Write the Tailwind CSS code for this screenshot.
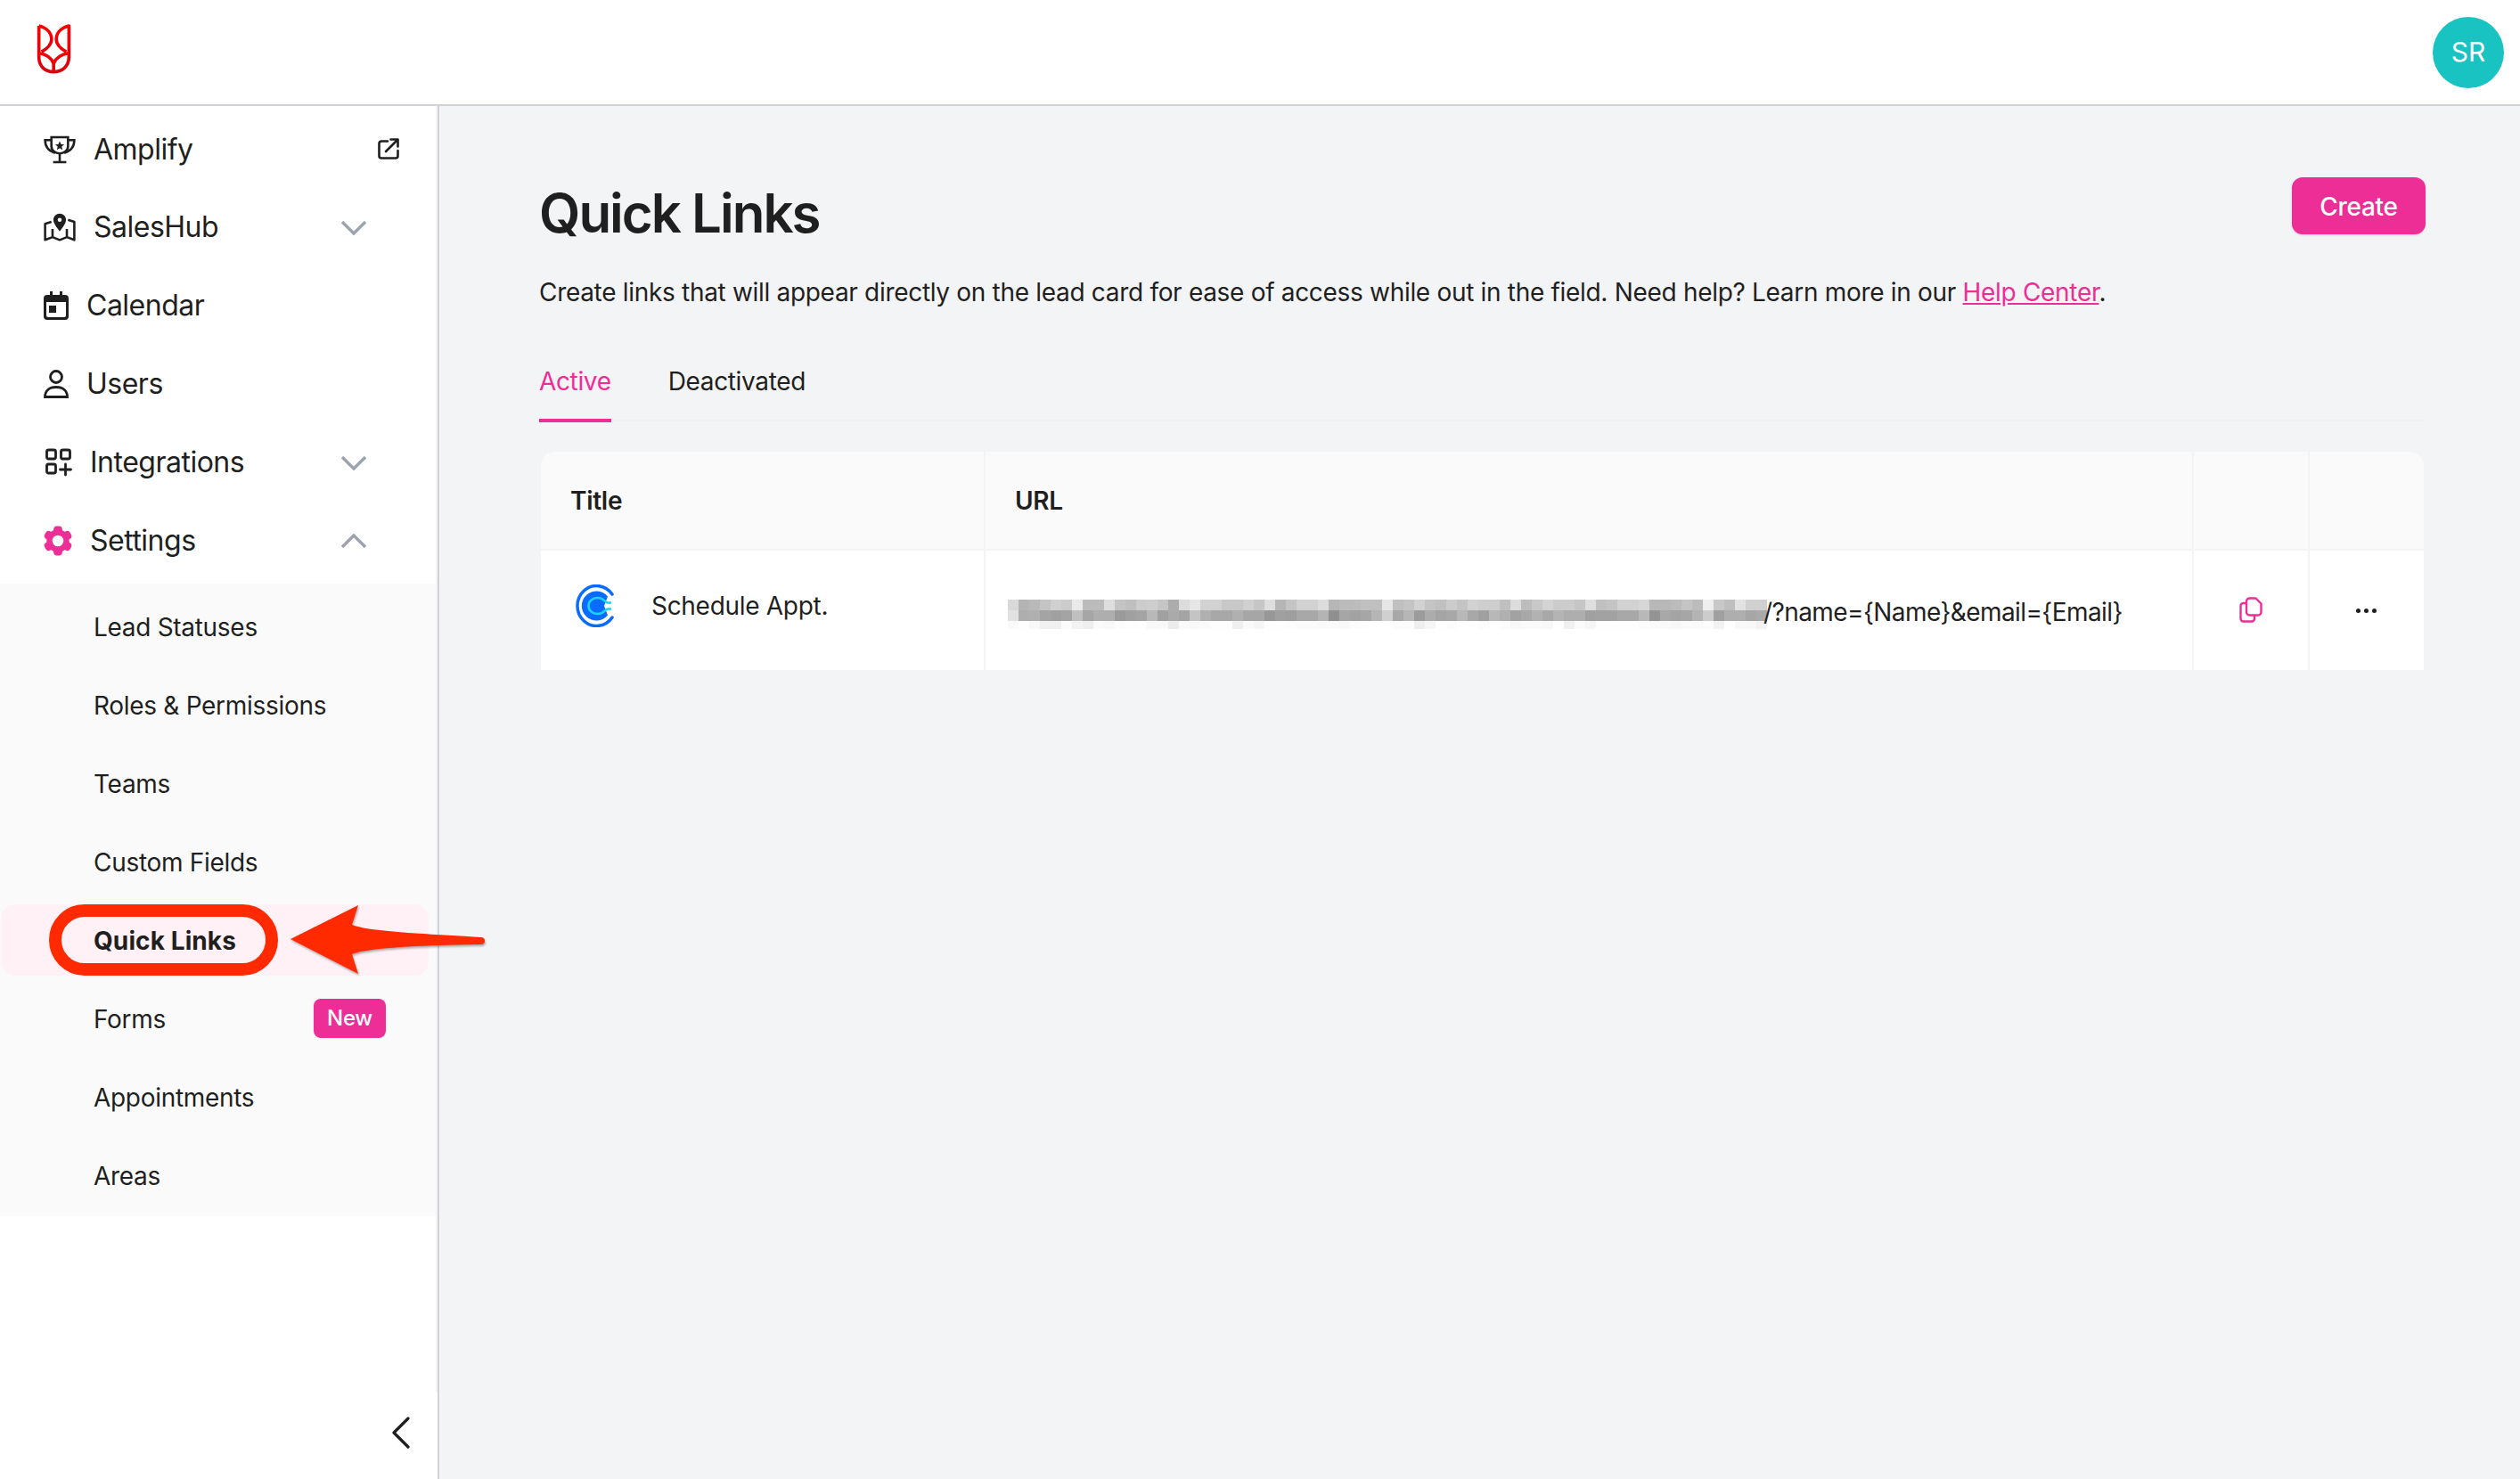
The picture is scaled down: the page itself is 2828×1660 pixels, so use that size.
<!DOCTYPE html>
<html lang="en">
<head>
  <meta charset="UTF-8" />
  <title>Quick Links</title>
  <script src="https://cdn.jsdelivr.net/npm/@tailwindcss/browser@4"></script>
</head>
<body class="h-screen overflow-hidden flex flex-col bg-[#f3f4f6] text-[#1f1f1f] font-[Inter,sans-serif]">
  <!-- top bar -->
  <header class="h-[119px] shrink-0 bg-white border-b-2 border-[#d1d1db] flex items-center justify-between pl-[41px] pr-[18px]">
    <svg class="w-[39px] h-[58px] -mt-[8px]" viewBox="125 75 118 175" fill="none" stroke="url(#logoRed)" stroke-width="11" stroke-linejoin="round">
      <defs>
        <linearGradient id="logoRed" x1="0" y1="0" x2="0" y2="1"><stop offset="0" stop-color="#ff0000"/><stop offset="1" stop-color="#d8040f"/></linearGradient>
      </defs>
      <path d="M133 84V190C133 222 155 240 183 240C211 240 235 222 235 190V84C208 91 192 108 192 130C192 150 208 162 226 172"/>
      <path d="M133 84C160 91 176 108 176 130C176 150 160 162 142 172"/>
      <path d="M133 176C155 180 176 192 183 212C190 192 213 180 235 176M183 212V240"/>
    </svg>
    <div class="w-[80px] h-[80px] rounded-full bg-[#18c3c2] text-white text-[30px] flex items-center justify-center">SR</div>
  </header>

  <div class="flex-1 flex min-h-0">
    <!-- sidebar -->
    <aside class="w-[493px] shrink-0 bg-white border-r-2 border-[#d1d1db] flex flex-col">
      <nav class="h-[1444px] shrink-0 pt-[4px] border-r-2 border-[#f5f5f7] text-[32px] tracking-[-0.5px]">
        <a class="h-[88px] flex items-center pl-[49px] gap-[20px]">
          <svg class="w-[36px] h-[33px]" viewBox="145 450 112 100" fill="none" stroke="#1f1f1f" stroke-width="8">
            <path d="M172 458H230V490C230 505 215 515 201 515C187 515 172 505 172 490Z"/>
            <path d="M172 468H150C150 490 160 505 185 513M230 468H252C252 490 242 505 217 513M201 515V545M178 545H224"/>
            <path d="M201 472L206 483L217 484L208 491L211 502L201 496L191 502L194 491L185 484L196 483Z" fill="#1f1f1f" stroke="none"/>
          </svg>
          <span class="flex-1 pt-[2px]">Amplify</span>
          <svg class="w-[24px] h-[24px] mr-[41px]" viewBox="0 0 24 24" fill="none" stroke="#1f1f1f" stroke-width="2.6" stroke-linecap="round" stroke-linejoin="round">
            <path d="M11 3.500H4A2.500 2.500 0 0 0 1.500 6V20A2.500 2.500 0 0 0 4 22.500H20A2.500 2.500 0 0 0 22.500 20V14"/>
            <path d="M9 15L22 2M14.500 1.500H22.500V9.500"/>
          </svg>
        </a>
        <a class="h-[88px] flex items-center pl-[49px] gap-[20px]">
          <svg class="w-[36px] h-[33px]" viewBox="145 715 112 100" fill="none" stroke="#1f1f1f" stroke-width="8" stroke-linejoin="round">
            <path d="M172 745L150 752V808L176 798L201 808L226 798L252 808V745L230 738M176 770V798M226 770V798"/>
            <path fill-rule="evenodd" d="M201 716C213 716 223 725 223 738C223 751 211 765 201 778C191 765 179 751 179 738C179 725 189 716 201 716ZM201 731A7 7 0 1 0 201 745A7 7 0 1 0 201 731Z" fill="#1f1f1f" stroke="none"/>
          </svg>
          <span class="flex-1">SalesHub</span>
          <svg class="w-[28px] h-[16px] mr-[78px] mt-[2px]" viewBox="0 0 28 16" fill="none" stroke="#9ca3af" stroke-width="3.400"><path d="M1 1L14 14L27 1"/></svg>
        </a>
        <a class="h-[88px] flex items-center pl-[49px] gap-[20px]">
          <svg class="w-[28px] h-[32px]" viewBox="0 0 28 32" fill="#1f1f1f">
            <path fill-rule="evenodd" d="M7 0H10V4H18V0H21V4H24A4 4 0 0 1 28 8V28A4 4 0 0 1 24 32H4A4 4 0 0 1 0 28V8A4 4 0 0 1 4 4H7ZM3 12V27A2 2 0 0 0 5 29H23A2 2 0 0 0 25 27V12ZM6 16H14V24H6Z"/>
          </svg>
          <span>Calendar</span>
        </a>
        <a class="h-[88px] flex items-center pl-[49px] gap-[20px]">
          <svg class="w-[28px] h-[32px]" viewBox="0 0 28 32" fill="none" stroke="#1f1f1f" stroke-width="2.800">
            <circle cx="14" cy="8" r="6.500"/>
            <path d="M1.500 30.500C1.500 24 6 19.500 14 19.500C22 19.500 26.500 24 26.500 30.500Z"/>
          </svg>
          <span>Users</span>
        </a>
        <a class="h-[88px] flex items-center pl-[49px] gap-[20px]">
          <svg class="w-[32px] h-[32px]" viewBox="0 0 32 32" fill="none" stroke="#1f1f1f" stroke-width="2.800" stroke-linecap="round">
            <rect x="3.500" y="2" width="10" height="10" rx="2"/>
            <rect x="19.500" y="2" width="10" height="10" rx="2"/>
            <rect x="3.500" y="18" width="10" height="10" rx="2"/>
            <path d="M24.500 18V30M18.500 24H30.500"/>
          </svg>
          <span class="flex-1">Integrations</span>
          <svg class="w-[28px] h-[16px] mr-[78px] mt-[2px]" viewBox="0 0 28 16" fill="none" stroke="#9ca3af" stroke-width="3.400"><path d="M1 1L14 14L27 1"/></svg>
        </a>
        <a class="h-[88px] flex items-center pl-[49px] gap-[20px]">
          <svg class="w-[32px] h-[32px] overflow-visible" viewBox="2.500 2.500 19 19" fill="#ec2e96">
            <path fill-rule="evenodd" d="M11.078 2.25c-.917 0-1.699.663-1.85 1.567L9.05 4.889c-.02.12-.115.26-.297.348a7.493 7.493 0 0 0-.986.57c-.166.115-.334.126-.45.083L6.3 5.508a1.875 1.875 0 0 0-2.282.819l-.922 1.597a1.875 1.875 0 0 0 .432 2.385l.84.692c.095.078.17.229.154.43a7.598 7.598 0 0 0 0 1.139c.015.2-.059.352-.153.43l-.841.692a1.875 1.875 0 0 0-.432 2.385l.922 1.597a1.875 1.875 0 0 0 2.282.818l1.019-.382c.115-.043.283-.031.45.082.312.214.641.405.985.57.182.088.277.228.297.35l.178 1.071c.151.904.933 1.567 1.85 1.567h1.844c.916 0 1.699-.663 1.85-1.567l.178-1.072c.02-.12.114-.26.297-.349.344-.165.673-.356.985-.57.167-.114.335-.125.45-.082l1.02.382a1.875 1.875 0 0 0 2.28-.819l.923-1.597a1.875 1.875 0 0 0-.432-2.385l-.84-.692c-.095-.078-.17-.229-.154-.43a7.614 7.614 0 0 0 0-1.139c-.016-.2.059-.352.153-.43l.84-.692c.708-.582.891-1.59.433-2.385l-.922-1.597a1.875 1.875 0 0 0-2.282-.818l-1.02.382c-.114.043-.282.031-.449-.083a7.49 7.49 0 0 0-.985-.57c-.183-.087-.277-.227-.297-.348l-.179-1.072a1.875 1.875 0 0 0-1.85-1.567h-1.843ZM12 15.75a3.75 3.75 0 1 0 0-7.5 3.75 3.750 0 0 0 0 7.5Z"/>
          </svg>
          <span class="flex-1">Settings</span>
          <svg class="w-[28px] h-[16px] mr-[78px]" viewBox="0 0 28 16" fill="none" stroke="#9ca3af" stroke-width="3.400"><path d="M1 15L14 2L27 15"/></svg>
        </a>

        <div class="mt-[4px] pt-[4px] pb-[2px] bg-[#fafafa] text-[28px] tracking-[-0.3px]">
          <a class="h-[88px] flex items-center pl-[105px] pt-[2px]">Lead Statuses</a>
          <a class="h-[88px] flex items-center pl-[105px] pt-[2px]">Roles &amp; Permissions</a>
          <a class="h-[88px] flex items-center pl-[105px] pt-[2px]">Teams</a>
          <a class="h-[88px] flex items-center pl-[105px] pt-[2px]">Custom Fields</a>
          <div class="h-[88px] py-[4px] relative">
            <a class="h-[80px] ml-px w-[480px] rounded-[16px] bg-[#fff1f5] flex items-center pl-[104px] pt-[2px] font-bold tracking-[0.1px]">Quick Links</a>
            <div class="absolute left-[55px] top-[4px] w-[257px] h-[80px] rounded-full border-[14px] border-[#ff2a00]"></div>
            <svg class="absolute z-10 left-[320px] top-[0px] w-[230px] h-[90px] drop-shadow-[1px_2px_1px_rgba(0,0,0,0.3)]" viewBox="0 0 230 90">
              <path fill="#ff2a00" d="M6 43L82 5L75 27C95 35 160 37 219 41C223 41 224 43 224 45C224 47 223 49 219 49C160 50 95 52 75 60L82 82Z"/>
            </svg>
          </div>
          <a class="h-[88px] flex items-center justify-between pl-[105px] pr-[56px]">
            <span class="pt-[2px]">Forms</span>
            <span class="w-[81px] h-[44px] rounded-[8px] bg-[#ec2e96] text-white text-[24px] font-medium flex items-center justify-center">New</span>
          </a>
          <a class="h-[88px] flex items-center pl-[105px] pt-[2px]">Appointments</a>
          <a class="h-[88px] flex items-center pl-[105px] pt-[2px]">Areas</a>
        </div>
      </nav>
      <div class="flex-1 flex items-center justify-end pr-[31px] pb-[7px]">
        <svg class="w-[20px] h-[36px]" viewBox="0 0 20 36" fill="none" stroke="#1f1f1f" stroke-width="3.200" stroke-linecap="round" stroke-linejoin="round"><path d="M18 2L2 18L18 34"/></svg>
      </div>
    </aside>

    <!-- content -->
    <main class="flex-1 min-w-0 pt-[80px] pl-[113px] pr-[106px]">
      <div class="flex items-start justify-between h-[64px]">
        <h1 class="text-[60px] leading-[72px] mt-[4px] -ml-[1px] font-semibold tracking-[-2px]">Quick Links</h1>
        <button class="w-[150px] h-[64px] rounded-[12px] bg-[#ec2e96] text-white text-[28px] font-medium tracking-[-0.3px] pt-[1px] shadow-sm">Create</button>
      </div>
      <p class="mt-[45px] text-[28px] leading-[40px] tracking-[-0.31px] -ml-[1px]">Create links that will appear directly on the lead card for ease of access while out in the field. Need help? Learn more in our <a class="text-[#ec2e96] underline">Help Center</a>.</p>

      <div class="mt-[60px] mr-[2px] flex gap-[64px] border-b-2 border-[#efeff1] text-[28px] leading-[40px] tracking-[-0.35px] -ml-[1px]">
        <a class="text-[#ec2e96] border-b-4 border-[#ec2e96] pb-[22px] -mb-[3px]">Active</a>
        <a>Deactivated</a>
      </div>

      <div class="mt-[34px] ml-px mr-[2px] rounded-t-[16px] overflow-hidden text-[28px] tracking-[-0.3px]">
        <div class="grid grid-cols-[499px_1356px_130px_1fr] h-[111px] bg-[#fafafa] border-b-2 border-[#f3f4f6] font-semibold">
          <div class="flex items-center pl-[33px] border-r-2 border-[#f3f4f6]">Title</div>
          <div class="flex items-center pl-[33px] border-r-2 border-[#f3f4f6]">URL</div>
          <div class="border-r-2 border-[#f3f4f6]"></div>
          <div></div>
        </div>
        <div class="grid grid-cols-[499px_1356px_130px_1fr] h-[134px] bg-white">
          <div class="flex items-center pl-[39px] pb-[11px] gap-[39px] border-r-2 border-[#f3f4f6]">
            <svg class="w-[46px] h-[48px]" viewBox="0 0 46 48" fill="none">
              <path d="M41 11A21.500 22.500 0 1 0 41 37" stroke="#0a6cff" stroke-width="3.500" stroke-linecap="round"/>
              <path d="M36 13.500A16.500 16.500 0 1 0 36 34.500L32 24Z" fill="#0a6cff"/>
              <path d="M40 20.500H36C33 20.500 32 15 25 15C18.500 15 14.500 19 14.500 24C14.500 29 18.500 33 25 33C32 33 33 27.500 36 27.500H40" stroke="#19d3f0" stroke-width="2.600"/>
            </svg>
            <span>Schedule Appt.</span>
          </div>
          <div class="flex items-center pl-[25px] pt-[4px] border-r-2 border-[#f3f4f6]">
            <div id="mosaic" class="w-[852px] shrink-0 grid grid-cols-[repeat(71,12px)] grid-rows-[12px_12px_9px] mt-[4px]"></div>
            <span class="-ml-[4px] whitespace-nowrap tracking-[-0.58px]">/?name={Name}&amp;email={Email}</span>
          </div>
          <div class="flex items-center justify-center border-r-2 border-[#f3f4f6]">
            <svg class="w-[26px] h-[29px] mb-[2px]" viewBox="0 0 26 29" fill="none" stroke="#ec2e96" stroke-width="2.400" stroke-linejoin="round">
              <path d="M8 5A3.500 3.500 0 0 1 11.500 1.500H18.500L24.500 7.500V17A3.500 3.500 0 0 1 21 20.500H11.500A3.500 3.500 0 0 1 8 17Z"/>
              <path d="M8 7H4.500A3 3 0 0 0 1.500 10V24.500A3 3 0 0 0 4.500 27.500H14A3 3 0 0 0 17 24.500V20.500"/>
            </svg>
          </div>
          <div class="flex items-center justify-center gap-[4px] pr-[2px]">
            <span class="w-[5px] h-[5px] rounded-full bg-[#1f1f1f]"></span>
            <span class="w-[5px] h-[5px] rounded-full bg-[#1f1f1f]"></span>
            <span class="w-[5px] h-[5px] rounded-full bg-[#1f1f1f]"></span>
          </div>
        </div>
      </div>
    </main>
  </div>

  <script>
    // pixelated part of the URL: grey per cell, three rows of 71
    const rows = [
      'd9 b4 b9 c4 d0 cc ea bc bc de c4 bf cc ce c6 ac dc e6 d2 d2 c8 c8 d0 c6 de b6 c4 d2 d2 dc b6 bc bc c0 c0 e6 c0 c4 d2 c4 c0 cc c4 d2 ce ce c0 dc bc c8 d4 cc cc c6 de c0 c4 d2 d2 d6 b8 b8 bc c4 bc ee c8 be e2 d0 d0',
      'e2 ae b0 a4 a0 a4 c0 a6 ae ae 9a a0 a4 b8 a0 aa a4 c4 b0 a8 a8 b0 a6 a6 98 a0 9e a8 a8 b4 90 a6 a2 a6 b6 d0 a8 b6 9c ac a4 a8 b8 a8 a0 b8 b0 a2 a8 b2 a8 b4 ae ae a0 a2 a2 a8 a8 b8 94 a8 a4 a6 b4 cc a0 ae ae a6 aa',
      'fa fe f8 f0 f0 fc f2 ee fa f8 fc fd fe f8 f8 ec fa f9 fb fe fe f0 fa f6 fe fe fd fc fc fa fa f8 fc fd ff ff fc fc ee f6 fe fc ff ff fc ff fc f8 fa fa f8 ff f0 fa f6 fe fe fe fe fc fa fa f8 fa fa fc f2 ff f8 f8 f2'
    ];
    const mosaic = document.getElementById('mosaic');
    rows.forEach((row) => {
      row.split(' ').forEach((g) => {
        const cell = document.createElement('span');
        cell.style.background = '#' + g + g + g;
        mosaic.appendChild(cell);
      });
    });
  </script>
</body>
</html>
